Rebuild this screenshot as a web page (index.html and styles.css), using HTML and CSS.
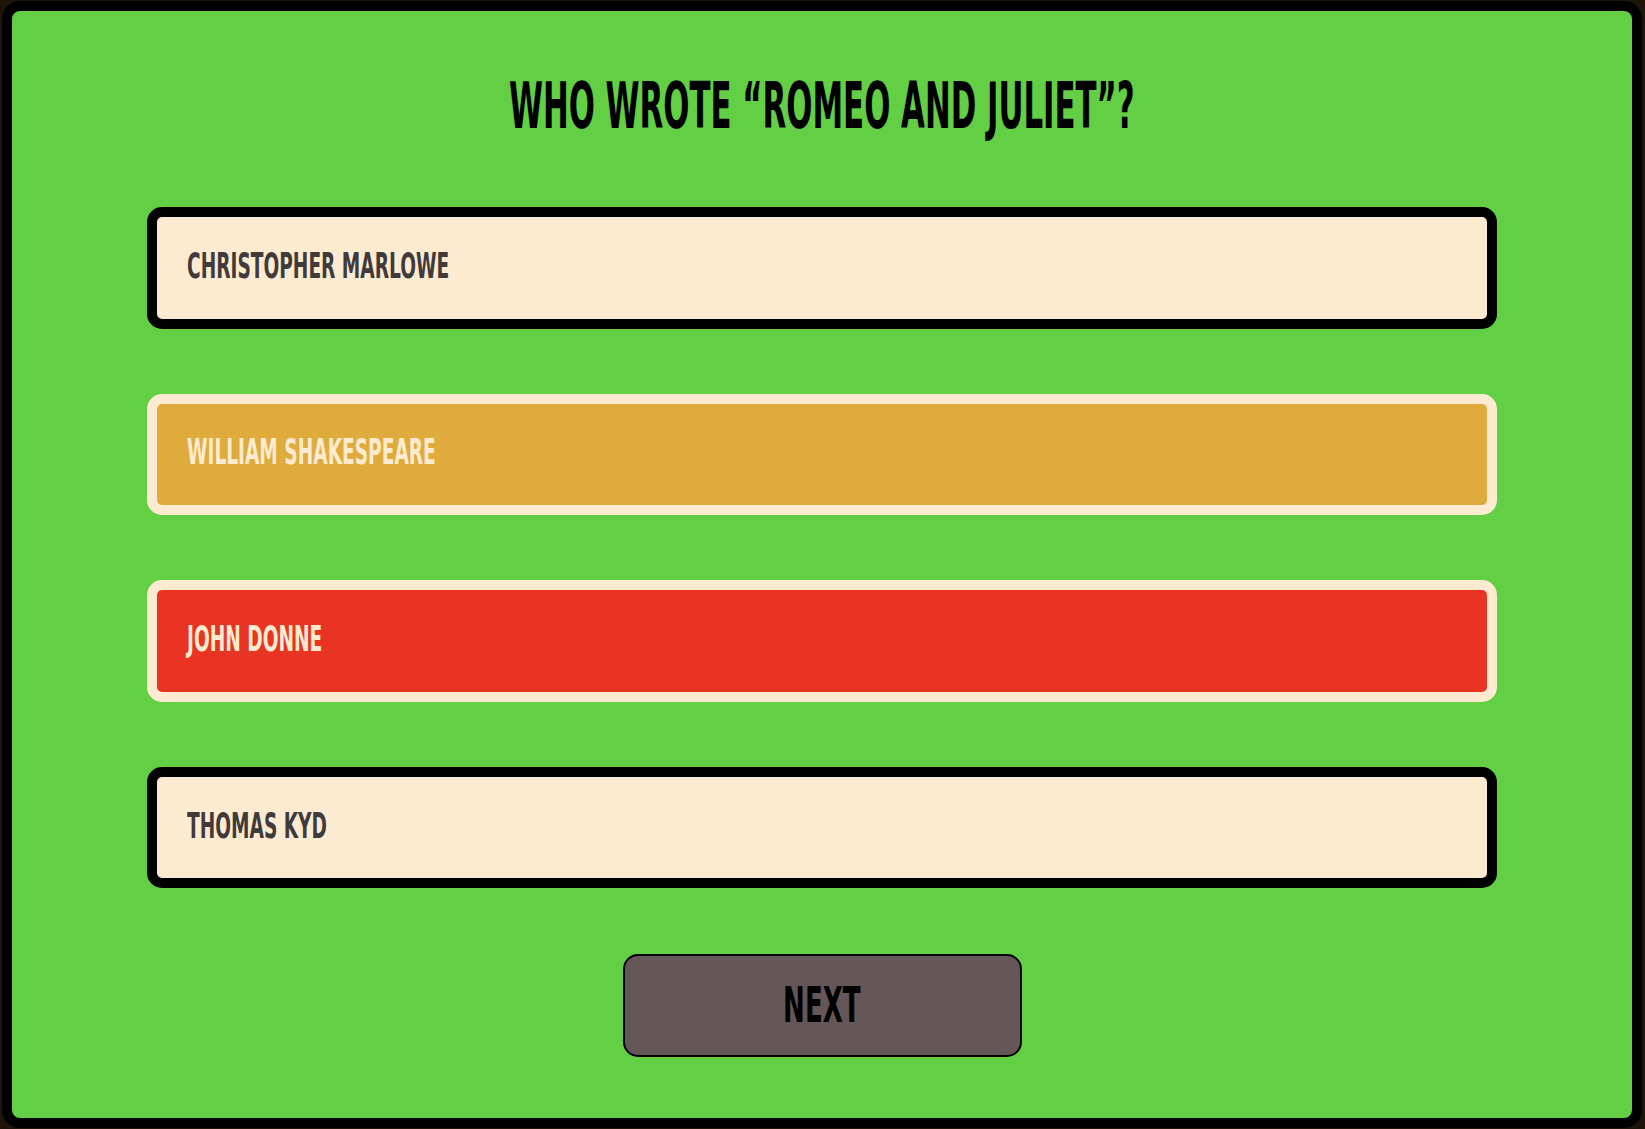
FILE: index.html
```html
<!DOCTYPE html>
<html lang="en">
<head>
<meta charset="utf-8">
<title>Quiz</title>
<link rel="stylesheet" href="styles.css">
</head>
<body>
<main class="quiz">
  <h1 class="quiz__title"><span class="squeeze squeeze--title">WHO WROTE “ROMEO AND JULIET”?</span></h1>
  <div class="options">
    <button class="option option--idle"><span class="squeeze squeeze--opt">CHRISTOPHER MARLOWE</span></button>
    <button class="option option--correct"><span class="squeeze squeeze--opt">WILLIAM SHAKESPEARE</span></button>
    <button class="option option--wrong"><span class="squeeze squeeze--opt">JOHN DONNE</span></button>
    <button class="option option--idle"><span class="squeeze squeeze--opt">THOMAS KYD</span></button>
  </div>
  <button class="next"><span class="squeeze squeeze--next">NEXT</span></button>
</main>
</body>
</html>
```

FILE: styles.css
```css
html, body {
  height: 100%;
}
body {
  margin: 0;
  padding: 1px 3px 1px 2px;
  background: #1f1409;
  box-sizing: border-box;
  font-family: "Liberation Sans Narrow", "DejaVu Sans Condensed", "Liberation Sans", sans-serif;
}
.quiz {
  box-sizing: border-box;
  height: 1127px;
  border: 10px solid #000;
  border-radius: 18px;
  background: #62cf44;
  padding: 63px 135px 0 135px;
  display: flex;
  flex-direction: column;
}
.quiz__title {
  margin: 0;
  font-size: 64px;
  line-height: 64px;
  font-weight: 700;
  text-align: center;
  color: #000;
  white-space: nowrap;
}
.squeeze {
  display: inline-block;
  white-space: nowrap;
}
.squeeze--title {
  transform: scaleX(0.535);
  transform-origin: center;
}
.squeeze--opt {
  transform: scaleX(0.59);
  transform-origin: left center;
}
.squeeze--next {
  transform: scaleX(0.58);
  transform-origin: center;
}
.options {
  margin-top: 69px;
  display: flex;
  flex-direction: column;
  gap: 65px;
}
.option {
  box-sizing: border-box;
  height: 121.6px;
  border: 10px solid #000;
  border-radius: 15px;
  padding: 0 30px 3px 30px;
  margin: 0;
  display: flex;
  align-items: center;
  font-family: inherit;
  font-size: 35px;
  line-height: 35px;
  font-weight: 700;
  text-align: left;
  cursor: pointer;
}
.option--idle {
  background: #fdebd1;
  border-color: #000;
  color: #403a3a;
}
.option--correct {
  background: #dfab3c;
  border-color: #fdebd1;
  color: #fdebd1;
}
.option--wrong {
  background: #e93424;
  border-color: #fdebd1;
  color: #fdebd1;
}
.next {
  align-self: center;
  margin-top: 66px;
  box-sizing: border-box;
  width: 399px;
  height: 103px;
  border: 2px solid #000;
  border-radius: 15px;
  background: #655757;
  color: #000;
  font-family: inherit;
  font-size: 50px;
  line-height: 50px;
  font-weight: 700;
  padding: 0 0 2px 0;
  display: flex;
  align-items: center;
  justify-content: center;
  cursor: pointer;
}
```
